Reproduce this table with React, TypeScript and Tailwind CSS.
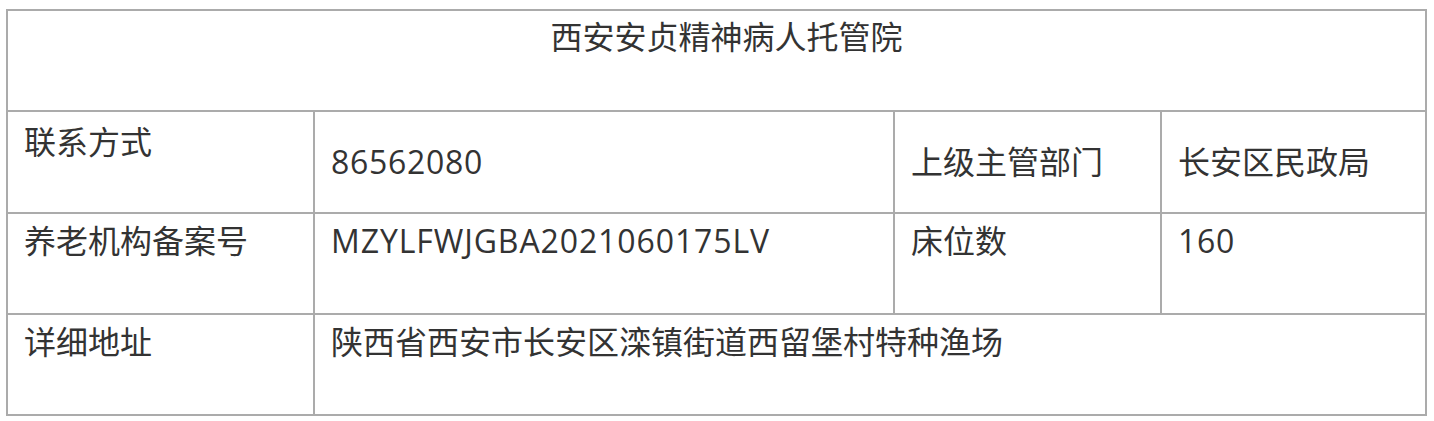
import React from "react";

const cell = "border-r-2 border-b-2 border-[#ababab] px-4";

export default function App() {
  return (
    <div
      className="bg-white w-[1434px] h-[421px] pt-[9px] pl-[6px] text-[32px] leading-[32px] text-[#333333]"
      style={{ fontFamily: '"Open Sans", "Noto Sans CJK SC", sans-serif' }}
    >
      <div className="grid grid-cols-[307px_580px_267px_265px] grid-rows-[101px_102px_101px_101px] w-[1421px] border-l-2 border-t-2 border-[#ababab]">
        <div className={`${cell} col-span-4 pt-[10px] pl-[36px] text-center`}>西安安贞精神病人托管院</div>

        <div className={`${cell} pt-[14px]`}>联系方式</div>
        <div className={`${cell} flex items-center tracking-[0.7px]`}>86562080</div>
        <div className={`${cell} flex items-center`}>上级主管部门</div>
        <div className={`${cell} flex items-center`}>长安区民政局</div>

        <div className={`${cell} pt-[11px]`}>养老机构备案号</div>
        <div className={`${cell} pt-[11px] tracking-[0.9px]`}>MZYLFWJGBA2021060175LV</div>
        <div className={`${cell} pt-[11px]`}>床位数</div>
        <div className={`${cell} pt-[11px] tracking-[0.7px]`}>160</div>

        <div className={`${cell} pt-[11px]`}>详细地址</div>
        <div className={`${cell} col-span-3 pt-[11px]`}>陕西省西安市长安区滦镇街道西留堡村特种渔场</div>
      </div>
    </div>
  );
}
